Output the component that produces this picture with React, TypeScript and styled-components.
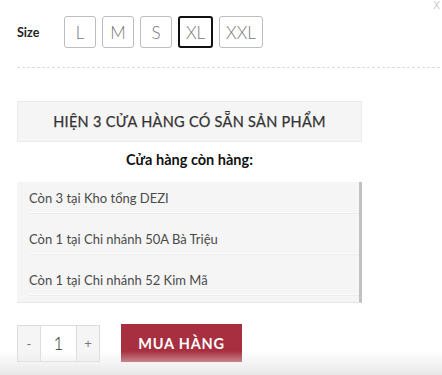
import React from "react";
import styled, { createGlobalStyle } from "styled-components";

const Global = createGlobalStyle`
  html, body { margin: 0; padding: 0; background: #fff; }
  body { font-family: Lato, "Open Sans", "Noto Sans", sans-serif; color: #333; }
  * { box-sizing: border-box; }
`;

const Page = styled.div`
  position: relative;
  width: 442px;
  height: 375px;
  overflow: hidden;
  padding: 16px 0 0 17px;
`;

const Close = styled.span`
  position: absolute;
  top: 0px;
  right: 2px;
  font-size: 10px;
  color: #c8c8c8;
  font-family: "Liberation Sans", sans-serif;
`;

const SizeRow = styled.div`
  display: flex;
  align-items: center;
  height: 32px;
`;

const SizeLabel = styled.span`
  width: 47px;
  font-size: 12.5px;
  font-weight: 700;
  color: #222;
`;

const SizeList = styled.div`
  display: flex;
  gap: 6px;
`;

const SizeBtn = styled.button<{ $active?: boolean; $w: number }>`
  width: ${(p) => p.$w}px;
  height: 32px;
  padding: 0;
  background: #fff;
  border: ${(p) => (p.$active ? "2px solid #111" : "1px solid #bdbdbd")};
  border-radius: 3px;
  font-family: Lato, sans-serif;
  font-weight: 300;
  font-size: 17px;
  color: #777;
  display: flex;
  align-items: center;
  justify-content: center;
`;

const Divider = styled.hr`
  margin: 19px 0 0 0;
  border: 0;
  border-top: 1px dashed #dcdcdc;
  width: 423px;
`;

const Panel = styled.div`
  width: 345px;
  margin-top: 33px;
  display: flex;
  flex-direction: column;
`;

const Banner = styled.div`
  height: 41px;
  background: #f5f5f5;
  border: 1px solid #ebebeb;
  display: flex;
  align-items: center;
  justify-content: center;
  font-size: 14.5px;
  font-weight: 400;
  -webkit-text-stroke: 0.25px #333;
  color: #333;
  letter-spacing: 0.3px;
`;

const Title = styled.div`
  text-align: center;
  font-size: 14.5px;
  font-weight: 700;
  color: #111;
  margin-top: 8px;
  height: 32px;
  line-height: 20px;
`;

const StoreList = styled.div`
  height: 121px;
  background: #f5f5f5;
  border-right: 3px solid #c1c1c1;
  border-bottom: 1px solid #e6e6e6;
  overflow: hidden;
`;

const StoreRow = styled.div`
  margin: 0 0 0 12px;
  padding: 18px 0 6px;
  line-height: 16px;
  font-size: 13px;
  color: #4a4a4a;
  border-bottom: 1px solid #fbfbfb;
  box-shadow: 0 1px 0 #ececec;
  &:first-child {
    padding-top: 8px;
  }
`;

const BuyRow = styled.div`
  display: flex;
  align-items: center;
  gap: 21px;
  margin-top: 21px;
`;

const Qty = styled.div`
  display: flex;
  height: 37px;
  border: 1px solid #dcdcdc;
`;

const QtyBtn = styled.span`
  width: 22px;
  background: #f5f5f5;
  display: flex;
  align-items: center;
  justify-content: center;
  color: #777;
  font-size: 13px;
  font-family: "Liberation Sans", sans-serif;
`;

const QtyInput = styled.span`
  width: 37px;
  border-left: 1px solid #dcdcdc;
  border-right: 1px solid #dcdcdc;
  background: #fff;
  display: flex;
  align-items: center;
  justify-content: center;
  font-size: 17px;
  font-weight: 300;
  color: #333;
`;

const BuyBtn = styled.button`
  width: 121px;
  height: 38px;
  border: 0;
  background: #a82f3f;
  color: #fff;
  font-family: Lato, sans-serif;
  font-weight: 700;
  font-size: 14.5px;
  letter-spacing: 0.8px;
`;

const Fade = styled.div`
  position: absolute;
  left: 0;
  right: 0;
  bottom: 0;
  height: 24px;
  background: linear-gradient(to bottom, rgba(238, 238, 238, 0), rgba(232, 232, 232, 1));
  pointer-events: none;
`;

const sizes = [
  { s: "L", w: 32 },
  { s: "M", w: 32 },
  { s: "S", w: 32 },
  { s: "XL", w: 35, active: true },
  { s: "XXL", w: 44 },
];

const stores = [
  "Còn 3 tại Kho tổng DEZI",
  "Còn 1 tại Chi nhánh 50A Bà Triệu",
  "Còn 1 tại Chi nhánh 52 Kim Mã",
];

export default function App() {
  return (
    <Page>
      <Global />
      <Close>X</Close>
      <SizeRow>
        <SizeLabel>Size</SizeLabel>
        <SizeList>
          {sizes.map((z) => (
            <SizeBtn key={z.s} $w={z.w} $active={z.active}>
              {z.s}
            </SizeBtn>
          ))}
        </SizeList>
      </SizeRow>
      <Divider />
      <Panel>
        <Banner>HIỆN 3 CỬA HÀNG CÓ SẴN SẢN PHẨM</Banner>
        <Title>Cửa hàng còn hàng:</Title>
        <StoreList>
          {stores.map((s) => (
            <StoreRow key={s}>{s}</StoreRow>
          ))}
        </StoreList>
      </Panel>
      <BuyRow>
        <Qty>
          <QtyBtn>-</QtyBtn>
          <QtyInput>1</QtyInput>
          <QtyBtn>+</QtyBtn>
        </Qty>
        <BuyBtn>MUA HÀNG</BuyBtn>
      </BuyRow>
      <Fade />
    </Page>
  );
}
